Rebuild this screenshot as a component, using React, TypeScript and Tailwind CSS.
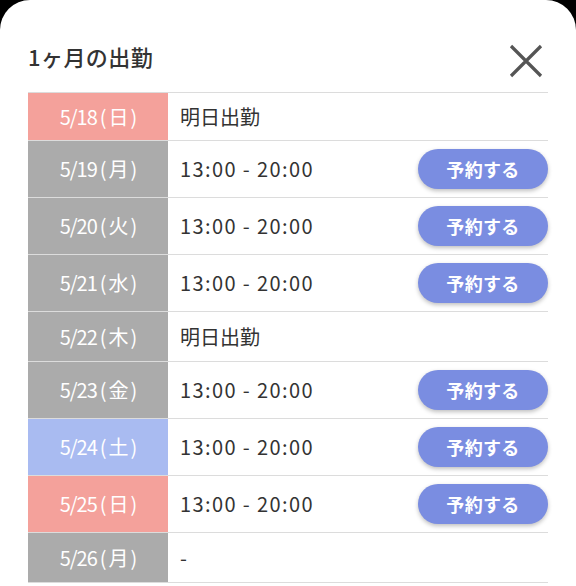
import React from 'react';

type Kind = 'sun' | 'sat' | 'day';

type Row = {
  date: string;
  wd: string;
  kind: Kind;
  text: string;
  reserve?: boolean;
};

const ROWS: Row[] = [
  { date: '5/18', wd: '日', kind: 'sun', text: '明日出勤' },
  { date: '5/19', wd: '月', kind: 'day', text: '13:00 - 20:00', reserve: true },
  { date: '5/20', wd: '火', kind: 'day', text: '13:00 - 20:00', reserve: true },
  { date: '5/21', wd: '水', kind: 'day', text: '13:00 - 20:00', reserve: true },
  { date: '5/22', wd: '木', kind: 'day', text: '明日出勤' },
  { date: '5/23', wd: '金', kind: 'day', text: '13:00 - 20:00', reserve: true },
  { date: '5/24', wd: '土', kind: 'sat', text: '13:00 - 20:00', reserve: true },
  { date: '5/25', wd: '日', kind: 'sun', text: '13:00 - 20:00', reserve: true },
  { date: '5/26', wd: '月', kind: 'day', text: '-' },
];

const dateBg: Record<Kind, string> = {
  sun: 'bg-[#f4a19b]',
  sat: 'bg-[#a9bbf1]',
  day: 'bg-[#ababab]',
};

const font = { fontFamily: '"Noto Sans CJK JP", "Noto Sans", sans-serif' };

export default function App() {
  return (
    <div className="w-[576px] h-[586px] bg-black overflow-hidden" style={font}>
      <div className="h-full bg-white rounded-t-[30px] px-[28px] pt-[36px]">
        {/* ヘッダー */}
        <div className="flex items-center justify-between h-[40px] mb-[16px]">
          <h2 className="text-[22px] font-medium text-[#333333] tracking-[0.02em]">1ヶ月の出勤</h2>
          <button className="w-[40px] h-[40px] flex items-center justify-center mr-[2px] mt-[10px]">
            <svg width="34" height="34" viewBox="0 0 34 34">
              <path d="M2 2 L32 32 M32 2 L2 32" stroke="#555555" strokeWidth="3.2" />
            </svg>
          </button>
        </div>

        {/* 出勤一覧 */}
        <div className="border-t border-[#dcdcdc]">
          {ROWS.map((row, i) => (
            <div
              key={row.date}
              className={`flex border-b border-[#dcdcdc] ${row.reserve ? 'h-[57px]' : i === 0 ? 'h-[48px]' : 'h-[50px]'}`}
            >
              <div
                className={`w-[140px] flex items-center justify-center text-white text-[20px] font-normal tracking-[-0.05em] ${dateBg[row.kind]}`}
              >
                <span>{row.date}</span>
                <span className="ml-[3px]">(</span>
                <span className="mx-[3px]">{row.wd}</span>
                <span>)</span>
              </div>
              <div className="flex-1 flex items-center justify-between pl-[12px]">
                <span
                  className={`text-[20px] text-[#333333] ${row.text.startsWith('1') ? 'tracking-[0.07em]' : ''}`}
                >
                  {row.text}
                </span>
                {row.reserve && (
                  <button className="w-[130px] h-[40px] rounded-full bg-[#7a8de1] text-white text-[18px] font-bold tracking-[0.02em] shadow-[0_2px_4px_rgba(0,0,0,0.25)]">
                    予約する
                  </button>
                )}
              </div>
            </div>
          ))}
        </div>
      </div>
    </div>
  );
}
